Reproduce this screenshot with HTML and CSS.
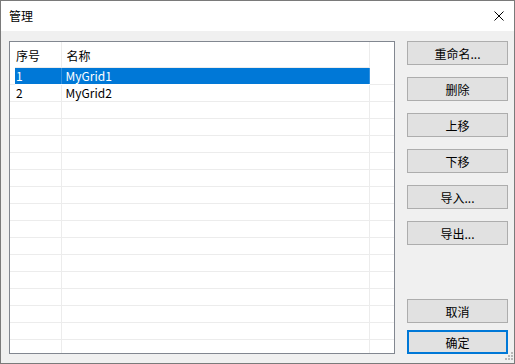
FILE: index.html
```html
<!DOCTYPE html>
<html lang="zh-CN">

<head>
    <meta charset="UTF-8">
    <title>管理</title>
    <link rel="stylesheet" href="styles.css">
</head>

<body>
    <div class="dialog">
        <div class="titlebar">
            <span class="title">管理</span>
            <svg class="close" width="10" height="10" viewBox="0 0 10 10">
                <path d="M0.5 0.5 L9.5 9.5 M9.5 0.5 L0.5 9.5" stroke="#000" stroke-width="1" fill="none" />
            </svg>
        </div>

        <div class="client">
            <div class="grid-box">
                <table class="grid">
                    <colgroup>
                        <col class="c-hdr">
                        <col class="c-no">
                        <col class="c-name">
                        <col class="c-fill">
                    </colgroup>
                    <thead>
                        <tr>
                            <th class="rh"></th>
                            <th>序号</th>
                            <th>名称</th>
                            <th class="fill"></th>
                        </tr>
                    </thead>
                    <tbody>
                        <tr class="selected">
                            <td class="rh"></td>
                            <td>1</td>
                            <td>MyGrid1</td>
                            <td class="fill"></td>
                        </tr>
                        <tr>
                            <td class="rh"></td>
                            <td>2</td>
                            <td>MyGrid2</td>
                            <td class="fill"></td>
                        </tr>
                        <tr><td class="rh"></td><td></td><td></td><td class="fill"></td></tr>
                        <tr><td class="rh"></td><td></td><td></td><td class="fill"></td></tr>
                        <tr><td class="rh"></td><td></td><td></td><td class="fill"></td></tr>
                        <tr><td class="rh"></td><td></td><td></td><td class="fill"></td></tr>
                        <tr><td class="rh"></td><td></td><td></td><td class="fill"></td></tr>
                        <tr><td class="rh"></td><td></td><td></td><td class="fill"></td></tr>
                        <tr><td class="rh"></td><td></td><td></td><td class="fill"></td></tr>
                        <tr><td class="rh"></td><td></td><td></td><td class="fill"></td></tr>
                        <tr><td class="rh"></td><td></td><td></td><td class="fill"></td></tr>
                        <tr><td class="rh"></td><td></td><td></td><td class="fill"></td></tr>
                        <tr><td class="rh"></td><td></td><td></td><td class="fill"></td></tr>
                        <tr><td class="rh"></td><td></td><td></td><td class="fill"></td></tr>
                        <tr><td class="rh"></td><td></td><td></td><td class="fill"></td></tr>
                        <tr><td class="rh"></td><td></td><td></td><td class="fill"></td></tr>
                        <tr class="last"><td class="rh"></td><td></td><td></td><td class="fill"></td></tr>
                    </tbody>
                </table>
            </div>

            <div class="buttons">
                <div class="group">
                    <button class="btn">重命名...</button>
                    <button class="btn">删除</button>
                    <button class="btn">上移</button>
                    <button class="btn">下移</button>
                    <button class="btn">导入...</button>
                    <button class="btn">导出...</button>
                </div>
                <div class="group bottom">
                    <button class="btn">取消</button>
                    <button class="btn default">确定</button>
                </div>
            </div>
        </div>

        <svg class="grip" width="12" height="12" viewBox="0 0 12 12">
            <rect x="9" y="1" width="2" height="2" fill="#b8b8b8" />
            <rect x="6" y="4" width="2" height="2" fill="#b8b8b8" />
            <rect x="9" y="4" width="2" height="2" fill="#b8b8b8" />
            <rect x="3" y="7" width="2" height="2" fill="#b8b8b8" />
            <rect x="6" y="7" width="2" height="2" fill="#b8b8b8" />
            <rect x="9" y="7" width="2" height="2" fill="#b8b8b8" />
        </svg>
    </div>
</body>

</html>
```

FILE: styles.css
```css
body {
    margin: 0;
    font-family: "Noto Sans CJK SC", "Noto Sans", sans-serif;
    font-size: 12px;
    color: #000000;
}

.dialog {
    position: relative;
    width: 515px;
    height: 364px;
    box-sizing: border-box;
    border: 1px solid #7a7a7a;
    background-color: #f0f0f0;
    display: flex;
    flex-direction: column;
}

.titlebar {
    height: 30px;
    background-color: #ffffff;
    display: flex;
    align-items: center;
    justify-content: space-between;
    padding: 0 10px 0 8px;
}

.title {
    line-height: 16px;
}

.close {
    display: block;
}

.client {
    flex: 1;
    display: flex;
    gap: 12px;
    padding: 10px 6px 9px 8px;
}

.grid-box {
    width: 386px;
    height: 313px;
    box-sizing: border-box;
    border: 1px solid #828790;
    background-color: #ffffff;
    overflow: hidden;
}

.grid {
    border-collapse: collapse;
    table-layout: fixed;
    width: 384px;
}

.c-hdr {
    width: 5px;
}

.c-no {
    width: 46px;
}

.c-name {
    width: 308px;
}

.c-fill {
    width: 25px;
}

.grid th,
.grid td {
    padding: 0 0 0 4px;
    text-align: left;
    font-weight: normal;
    white-space: nowrap;
    overflow: hidden;
    border-right: 1px solid #ececec;
    border-bottom: 1px solid #ececec;
    box-sizing: border-box;
}

.grid th {
    height: 25px;
    padding-left: 5px;
    padding-top: 2px;
}

.grid th:nth-child(2) {
    padding-left: 1px;
}

.grid td {
    height: 17px;
    line-height: 14px;
}

.grid .rh {
    padding: 0;
    border-right: none;
}

.grid thead .rh,
.grid th.fill {
    border-bottom: none;
}

.grid .fill {
    border-right: none;
}

.grid td:nth-child(2) {
    padding-left: 1px;
}

.grid .selected td {
    background-color: #0078d7;
    color: #ffffff;
    border-right-color: #3391df;
    border-bottom-color: #ffffff;
}

.grid .selected td.rh,
.grid .selected td.fill {
    background-color: #ffffff;
    border-bottom-color: #ececec;
}

.grid .last td {
    border-bottom: none;
}

.buttons {
    width: 101px;
    display: flex;
    flex-direction: column;
    justify-content: space-between;
}

.group {
    display: flex;
    flex-direction: column;
    gap: 12px;
}

.group.bottom {
    gap: 7px;
}

.btn {
    height: 24px;
    padding: 0;
    border: 1px solid #adadad;
    background-color: #e1e1e1;
    font-family: "Noto Sans CJK SC", "Noto Sans", sans-serif;
    font-size: 12px;
    color: #000000;
}

.btn.default {
    border: 2px solid #0078d7;
}

.grip {
    position: absolute;
    right: 0;
    bottom: 0;
}
```
